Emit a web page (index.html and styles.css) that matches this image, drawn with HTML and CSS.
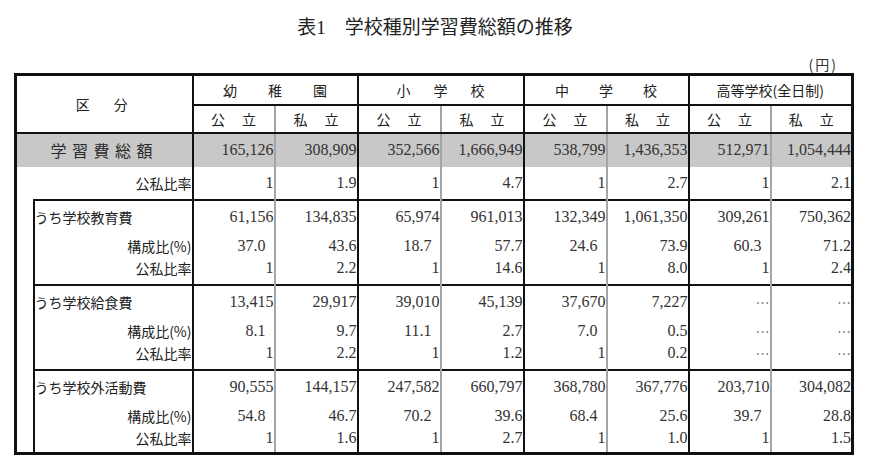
FILE: index.html
```html
<!DOCTYPE html>
<html lang="ja">
<head>
<meta charset="utf-8">
<title>表1 学校種別学習費総額の推移</title>
<link rel="stylesheet" href="styles.css">
</head>
<body>
<div class="page">
  <h1 class="title">表1　学校種別学習費総額の推移</h1>
  <div class="unit">(円)</div>
  <table class="tbl">
    <colgroup>
      <col class="c-ind">
      <col class="c-lab">
      <col class="c-82">
      <col class="c-83">
      <col class="c-83">
      <col class="c-83">
      <col class="c-83">
      <col class="c-82">
      <col class="c-82">
      <col class="c-82">
    </colgroup>
    <thead>
      <tr class="h1">
        <th colspan="2" rowspan="2" class="kubun">区　分</th>
        <th colspan="2" class="grp"><span class="g-yo">幼　稚　園</span></th>
        <th colspan="2" class="grp"><span class="g-sho">小　学　校</span></th>
        <th colspan="2" class="grp"><span class="g-chu">中　学　校</span></th>
        <th colspan="2" class="grp"><span class="g-ko">高等学校(全日制)</span></th>
      </tr>
      <tr class="h2">
        <th class="pub">公　立</th><th class="pri">私　立</th>
        <th class="pub">公　立</th><th class="pri">私　立</th>
        <th class="pub">公　立</th><th class="pri">私　立</th>
        <th class="pub">公　立</th><th class="pri">私　立</th>
      </tr>
    </thead>
    <tbody>
      <tr class="total">
        <td colspan="2" class="lab lab-total">学習費総額</td>
        <td class="n pub">165,126</td><td class="n pri">308,909</td>
        <td class="n pub">352,566</td><td class="n pri">1,666,949</td>
        <td class="n pub">538,799</td><td class="n pri">1,436,353</td>
        <td class="n pub">512,971</td><td class="n pri">1,054,444</td>
      </tr>
      <tr class="ratio0">
        <td colspan="2" class="lab lab-r">公私比率</td>
        <td class="n pub">1</td><td class="n pri">1.9</td>
        <td class="n pub">1</td><td class="n pri">4.7</td>
        <td class="n pub">1</td><td class="n pri">2.7</td>
        <td class="n pub">1</td><td class="n pri">2.1</td>
      </tr>

      <tr class="b1">
        <td rowspan="9" class="ind"></td>
        <td class="lab lab-main">うち学校教育費</td>
        <td class="n pub">61,156</td><td class="n pri">134,835</td>
        <td class="n pub">65,974</td><td class="n pri">961,013</td>
        <td class="n pub">132,349</td><td class="n pri">1,061,350</td>
        <td class="n pub">309,261</td><td class="n pri">750,362</td>
      </tr>
      <tr class="b2">
        <td class="lab lab-sub">構成比(%)</td>
        <td class="n pub sp">37.0</td><td class="n pri">43.6</td>
        <td class="n pub sp">18.7</td><td class="n pri">57.7</td>
        <td class="n pub sp">24.6</td><td class="n pri">73.9</td>
        <td class="n pub sp">60.3</td><td class="n pri">71.2</td>
      </tr>
      <tr class="b3">
        <td class="lab lab-sub">公私比率</td>
        <td class="n pub">1</td><td class="n pri">2.2</td>
        <td class="n pub">1</td><td class="n pri">14.6</td>
        <td class="n pub">1</td><td class="n pri">8.0</td>
        <td class="n pub">1</td><td class="n pri">2.4</td>
      </tr>

      <tr class="b1">
        <td class="lab lab-main">うち学校給食費</td>
        <td class="n pub">13,415</td><td class="n pri">29,917</td>
        <td class="n pub">39,010</td><td class="n pri">45,139</td>
        <td class="n pub">37,670</td><td class="n pri">7,227</td>
        <td class="n pub dots">…</td><td class="n pri dots">…</td>
      </tr>
      <tr class="b2">
        <td class="lab lab-sub">構成比(%)</td>
        <td class="n pub sp">8.1</td><td class="n pri">9.7</td>
        <td class="n pub sp">11.1</td><td class="n pri">2.7</td>
        <td class="n pub sp">7.0</td><td class="n pri">0.5</td>
        <td class="n pub dots">…</td><td class="n pri dots">…</td>
      </tr>
      <tr class="b3">
        <td class="lab lab-sub">公私比率</td>
        <td class="n pub">1</td><td class="n pri">2.2</td>
        <td class="n pub">1</td><td class="n pri">1.2</td>
        <td class="n pub">1</td><td class="n pri">0.2</td>
        <td class="n pub dots">…</td><td class="n pri dots">…</td>
      </tr>

      <tr class="b1">
        <td class="lab lab-main">うち学校外活動費</td>
        <td class="n pub">90,555</td><td class="n pri">144,157</td>
        <td class="n pub">247,582</td><td class="n pri">660,797</td>
        <td class="n pub">368,780</td><td class="n pri">367,776</td>
        <td class="n pub">203,710</td><td class="n pri">304,082</td>
      </tr>
      <tr class="b2">
        <td class="lab lab-sub">構成比(%)</td>
        <td class="n pub sp">54.8</td><td class="n pri">46.7</td>
        <td class="n pub sp">70.2</td><td class="n pri">39.6</td>
        <td class="n pub sp">68.4</td><td class="n pri">25.6</td>
        <td class="n pub sp">39.7</td><td class="n pri">28.8</td>
      </tr>
      <tr class="b3 last">
        <td class="lab lab-sub">公私比率</td>
        <td class="n pub">1</td><td class="n pri">1.6</td>
        <td class="n pub">1</td><td class="n pri">2.7</td>
        <td class="n pub">1</td><td class="n pri">1.0</td>
        <td class="n pub">1</td><td class="n pri">1.5</td>
      </tr>
    </tbody>
  </table>
</div>
</body>
</html>
```
FILE: styles.css
```css
html, body {
  margin: 0;
  padding: 0;
  background: #ffffff;
}

body {
  color: #222222;
  font-family: "Liberation Serif", "Noto Sans CJK JP", serif;
}

.page {
  width: 870px;
  padding-top: 17px;
}

.title {
  margin: 0;
  text-align: center;
  font-size: 19px;
  line-height: 22px;
  font-weight: normal;
  color: #222222;
  font-family: "Liberation Serif", "Noto Sans CJK JP", serif;
}

.unit {
  margin: 19px 0 2px;
  padding-right: 32px;
  text-align: right;
  font-size: 14px;
  line-height: 13px;
  letter-spacing: 2px;
  font-family: "Noto Sans CJK JP", sans-serif;
  color: #333333;
}

.tbl {
  margin-left: 14px;
  width: 840px;
  table-layout: fixed;
  border-collapse: collapse;
  border: 3px solid #111111;
}

.c-ind { width: 18px; }
.c-lab { width: 159px; }
.c-82 { width: 82px; }
.c-83 { width: 83px; }

.tbl th,
.tbl td {
  padding: 0;
}

.tbl th {
  font-family: "Noto Sans CJK JP", sans-serif;
  font-weight: normal;
  font-size: 14px;
  line-height: 1;
  color: #222222;
  text-align: center;
  vertical-align: middle;
}

.h1 { height: 30px; }
.h2 { height: 28px; }

.kubun {
  border-right: 2px solid #111111;
  border-bottom: 2px solid #111111;
  letter-spacing: 5px;
  padding-left: 5px;
}

.grp {
  border-right: 2px solid #111111;
  border-bottom: 2px solid #111111;
}

.g-yo { letter-spacing: 8.5px; padding-left: 8.5px; }
.g-sho { letter-spacing: 4.5px; padding-left: 4.5px; }
.g-chu { letter-spacing: 8px; padding-left: 8px; }
.g-ko { letter-spacing: 0; }

.h2 th {
  border-bottom: 2px solid #111111;
  letter-spacing: 1.5px;
  padding-left: 1.5px;
}

.pub { border-right: 2px solid #a4a4a4; }
.pri { border-right: 2px solid #111111; }

.tbl .h2 .pub { border-right: 2px solid #a4a4a4; }

.total { height: 34px; background: #c8c8c8; }
.ratio0 { height: 33px; }
.b1 { height: 34px; }
.b2 { height: 24px; }
.b3 { height: 27px; }
.b3.last { height: 26px; }

.lab {
  font-family: "Noto Sans CJK JP", sans-serif;
  font-size: 14px;
  line-height: 1;
  color: #222222;
  border-right: 2px solid #111111;
  white-space: nowrap;
}

.lab-total {
  text-align: center;
  font-size: 16px;
  letter-spacing: 5.5px;
  padding-left: 5.5px;
  color: #2a2a2a;
}

.lab-r,
.lab-sub {
  text-align: right;
  padding-right: 1px;
}

.lab-main {
  text-align: left;
  padding-left: 1px;
}

.lab-main,
.lab-sub {
  border-left: 2px solid #111111;
}

.b1 td {
  border-top: 2px solid #111111;
}

.b1 td.ind,
.ind {
  border-top: 0;
  border-right: 2px solid #111111;
}

.b3 td {
  padding-bottom: 5px;
}

.b3.last td {
  padding-bottom: 4px;
}

.b3 td.ind {
  padding-bottom: 0;
}

.n {
  text-align: right;
  padding-right: 4px;
  font-family: "Liberation Serif", serif;
  font-size: 16px;
  line-height: 18px;
  color: #333333;
  white-space: nowrap;
}

.tbl td.sp {
  padding-right: 8px;
}

.dots {
  font-family: "Noto Sans CJK JP", sans-serif;
  font-size: 14px;
  color: #666666;
}
```
